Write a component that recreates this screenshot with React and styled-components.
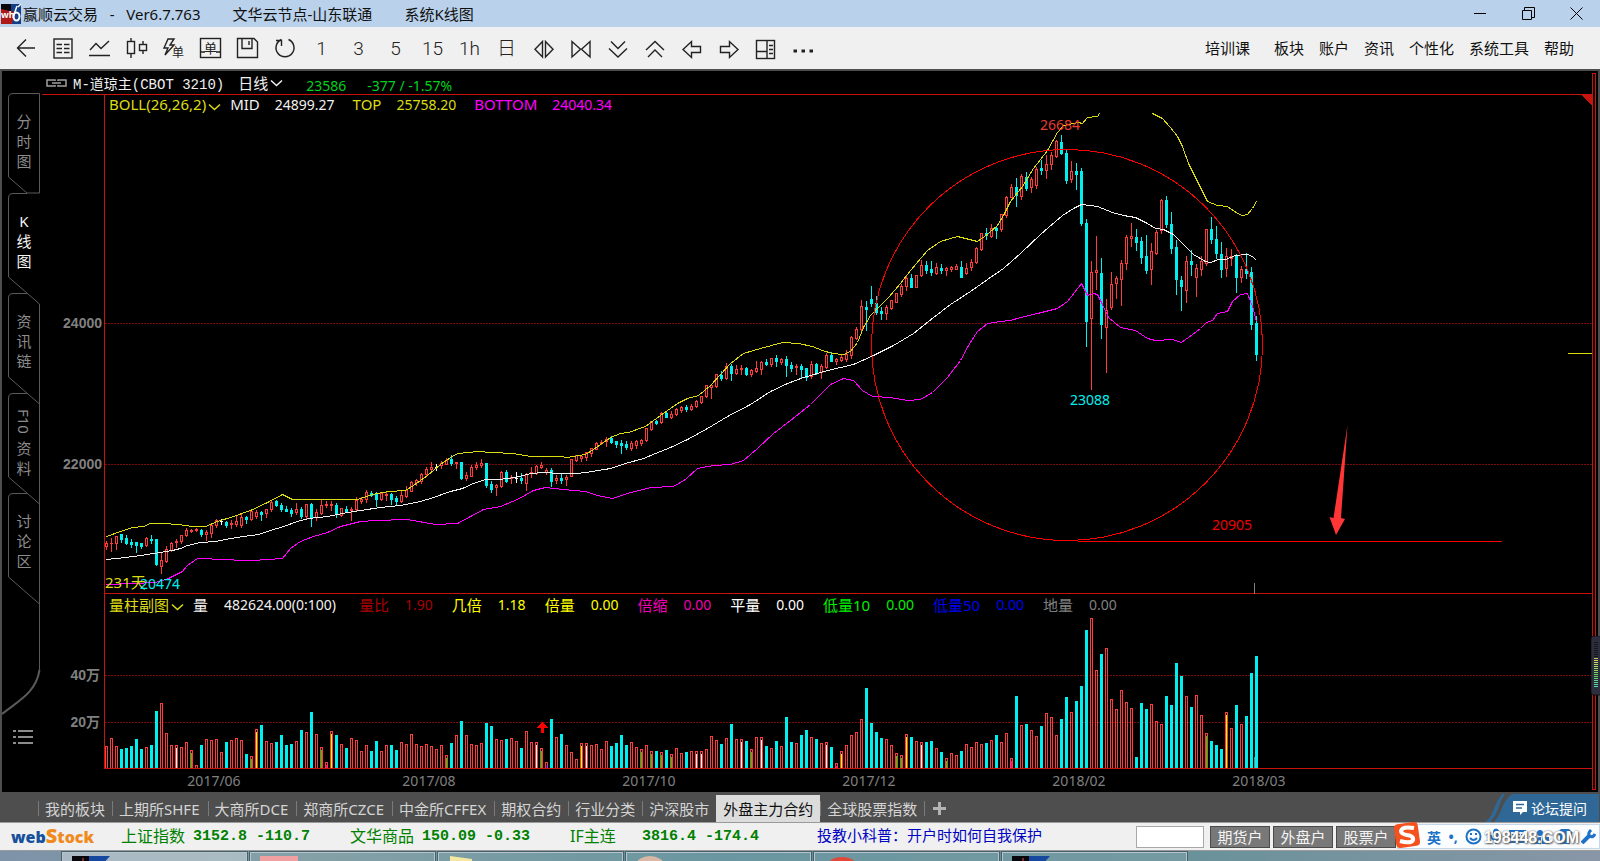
import React from 'react';
import styled, { createGlobalStyle, css } from 'styled-components';

const palette = {
  red: '#c8140c',
  up: '#ff3c3c',
  down: '#00f0f0',
  grid: '#7c0c0c',
  yellow: '#dcdc14',
  white: '#f0f0f0',
  magenta: '#ff00ff',
  frame: '#4e4e4e',
  muted: '#808080',
};

const chartFont = '"Noto Sans", "Noto Sans CJK SC", sans-serif';
const uiFont = '"Noto Sans", "Noto Sans CJK SC", sans-serif';

const GlobalStyle = createGlobalStyle`
  body {
    margin: 0;
    background: black;
    font-family: ${uiFont};
    font-size: 15px;
    overflow-x: hidden;
  }
  *, *::before, *::after {
    box-sizing: border-box;
  }
  button, input {
    font: inherit;
    margin: 0;
  }
  svg {
    display: block;
  }
`;

/* ---------- data ---------- */

// colour, high, body top, body bottom, low, volume top, volume mark
const BARS = `
r 541 543 546 549 746|r 538 543 543 551 738|r 536 536 543 549 746|c 534 534 539 542 749|c 535 538 543 544 748
c 539 542 544 547 746|c 542 542 545 552 739|c 543 543 546 548 749|r 537 538 545 546 747|c 535 539 540 543 745
c 539 539 564 565 711|r 552 560 566 573 703|r 546 549 561 562 733|r 542 543 550 551 745|r 539 541 542 547 745 w
r 535 535 541 543 747|r 528 530 535 536 742|r 529 530 531 532 750 g|r 528 529 530 531 765|c 529 530 534 536 745
r 530 532 534 540 739|r 525 525 533 537 740|r 519 520 525 527 739|w 519 521 521 524 752|c 521 522 525 527 742
r 520 523 524 528 740|r 515 521 524 526 738|r 513 517 525 527 740|c 516 517 519 523 754|r 511 511 519 520 756 g
r 510 512 516 518 729 y|c 511 512 514 520 725|r 509 509 513 517 741|r 501 502 509 511 743|c 500 501 505 506 742
c 503 505 509 511 735|c 506 509 511 511 745|c 508 510 513 516 744|r 503 509 512 514 741|c 507 509 516 518 730
r 504 504 516 519 732|c 503 504 517 526 712|r 509 512 517 520 734|r 499 505 513 514 747 g|r 501 504 505 507 762 m
r 501 504 505 510 731 y|c 503 505 514 517 735|r 508 508 515 516 744|c 506 509 511 512 748|r 507 509 510 520 738
r 497 500 509 511 740|r 497 499 501 503 751|r 490 492 499 502 745|c 491 493 495 496 751|c 492 494 499 506 741
r 493 493 499 500 751|r 491 494 495 500 745|c 493 494 499 504 745|c 496 498 501 504 750|r 490 495 501 502 742
r 486 490 496 497 744|r 481 482 491 491 734|r 479 480 482 485 744|r 473 474 481 483 746|r 467 469 474 476 744
r 462 467 469 470 746|w 464 467 467 470 749|r 461 463 465 468 745|r 458 460 464 464 755 g|c 455 459 463 465 743
r 462 462 463 468 735|c 462 462 478 479 721|r 472 475 478 480 735|r 465 467 476 476 744|r 462 465 467 469 745
r 459 463 465 467 743|c 463 463 485 487 723|c 481 484 489 492 726|r 484 485 487 495 739|r 471 472 486 487 740
c 470 472 481 482 739|r 475 477 478 483 738|w 472 478 478 482 741|c 473 478 480 483 748|r 473 474 483 490 731
r 467 472 473 477 742|r 465 466 473 474 742 w|r 462 465 467 468 748 g|r 468 470 472 474 762 b|c 468 470 481 486 719
r 475 478 480 483 737|c 474 478 480 483 734|r 475 477 479 485 745|r 459 459 476 476 752|r 455 455 460 461 759
r 455 456 458 461 743 y|r 452 452 457 460 743 w|r 448 448 453 456 745|r 442 443 449 449 744|r 440 442 443 444 749
r 437 439 441 446 741|c 436 438 442 443 746|c 441 441 444 447 743|c 440 443 445 453 735|c 441 444 447 449 745
r 441 443 448 450 742|r 440 441 445 448 747|r 439 440 443 445 749 g|r 428 428 440 441 745|r 421 421 429 430 751 g
c 420 421 423 424 751|r 412 413 422 423 752 g|c 412 413 417 417 750|r 411 414 417 418 754 g|r 408 409 414 415 748
r 406 407 410 412 753|c 405 407 409 411 752|r 404 406 409 410 751|r 400 401 406 407 751 w|r 396 396 402 403 751 w
r 385 385 396 397 749|r 385 385 387 398 736|r 374 374 386 387 740|c 371 375 378 380 744|r 363 366 378 379 738
c 364 366 373 380 724|r 365 369 373 374 739|r 365 368 369 374 739 w|c 367 368 374 375 741|r 369 370 374 376 749 g
r 361 368 371 372 737|r 361 362 369 374 737 w|c 359 362 364 365 746|r 358 358 364 366 748|c 355 358 361 366 741
r 358 359 362 364 746|c 356 359 365 376 717|c 362 365 368 371 742|r 364 366 367 374 743|c 364 366 369 378 735
c 368 368 377 380 730|r 361 364 376 378 737|c 363 364 373 374 739|r 364 366 372 378 743|r 353 355 367 368 742 w
c 352 355 361 361 747|r 358 359 361 364 763 m|r 355 357 360 361 751 y|r 350 354 359 361 745|r 336 337 355 358 735
r 327 329 338 339 732|r 300 306 329 330 719|c 301 307 309 330 688|c 286 299 303 306 723|c 296 303 312 314 732
c 307 311 313 319 738|r 305 307 313 319 739|r 300 300 308 309 745|r 293 293 302 302 753 g|r 284 286 294 296 755 g
r 275 278 286 290 734 y|c 274 278 287 287 737|r 275 275 287 287 741|r 260 265 275 276 742 w|c 261 265 270 273 742
c 261 269 272 275 741|r 263 267 273 274 748|c 264 268 270 273 752|r 267 268 270 275 758 g|r 266 267 269 271 753
r 264 266 269 269 755|c 261 267 277 277 751|r 263 268 273 274 744|r 259 262 267 270 747|r 247 248 262 263 742
r 233 233 249 250 744|c 228 233 235 239 743|r 224 228 236 237 740|c 226 228 230 238 735|r 214 214 229 231 742
r 196 197 215 217 733|r 184 187 197 197 758 m|c 178 187 195 206 696|r 174 176 196 199 725|c 172 177 188 190 724
r 177 179 187 192 730|r 167 169 185 188 736|c 160 168 170 174 726|r 155 164 170 178 713|r 152 155 164 169 717
r 140 141 156 157 735|c 135 142 153 154 719|c 150 153 180 183 697|r 161 171 179 182 712|c 163 171 174 189 701
c 168 171 223 225 686|c 219 223 321 346 630|r 261 272 318 389 618|r 236 270 272 289 670|c 258 273 324 338 654
r 299 310 327 372 648|r 272 284 307 309 699|r 276 278 283 298 709|r 260 263 279 305 690|r 235 237 263 269 702
r 223 236 238 246 708|c 229 237 242 250 757|c 237 241 257 263 703|c 235 256 270 273 709|r 243 251 269 284 704
r 230 232 253 254 721|r 199 200 230 233 724|c 196 200 224 227 696|c 212 224 248 253 705|c 240 247 279 294 663
c 276 280 286 310 676|r 256 261 290 302 696|c 250 261 264 275 707|r 264 268 277 296 695|r 256 261 269 275 715
r 229 229 263 265 733 g|c 217 229 239 243 741|c 226 239 253 258 745|c 242 254 269 277 749|r 248 256 268 276 712 y
r 249 256 258 265 728|c 254 255 277 292 705|r 266 269 277 282 724|c 253 269 273 278 716|c 267 272 324 329 673
c 316 323 354 360 656
`
  .trim()
  .split(/[|\n]/)
  .map((row, i) => {
    const [color, high, top, bottom, low, vol, mark] = row.split(' ');
    return { x: 106 + i * 5, color, high: +high, top: +top, bottom: +bottom, low: +low, vol: +vol, mark };
  });

const MID =
  '106,559 125,557 140,555 160,552 172,550 180,548 187,545 200,542 215,541 230,538 243,536 258,534 270,530 283,526 297,521 308,518 327,516 342,513 360,510 380,507 400,505 420,501 433,497 450,491 462,488 473,483 485,479 498,479 515,477 530,473 543,472 560,473 577,473 592,471 610,468 625,463 643,458 655,453 670,447 687,439 707,428 727,416 750,404 770,391 787,383 803,377 827,370 853,364 873,355 893,345 913,333 933,317 950,304 970,291 987,279 1003,268 1020,253 1040,234 1062,215 1073,208 1081,204 1097,206 1112,212 1123,215 1135,217 1147,223 1155,228 1163,229 1173,234 1183,244 1193,254 1205,261 1210,262 1218,259 1225,259 1235,255 1247,254 1252,256 1256,260';

const TOP =
  '106,536 120,531 132,527 143,526 150,523 163,523 178,524 192,526 205,526 217,521 233,516 250,510 267,502 282,494 292,499 317,499 357,499 372,494 388,491 405,490 413,485 427,475 440,464 453,455 458,453 477,451 492,452 513,453 530,456 560,456 567,457 585,454 593,449 603,442 610,437 620,433 628,432 645,426 660,415 677,403 687,398 698,395 710,385 720,374 730,363 743,353 760,348 782,342 798,343 812,346 822,350 832,353 843,354 850,351 857,342 863,327 870,315 877,308 888,297 900,283 910,270 927,250 940,241 957,236 977,241 988,233 997,225 1003,215 1010,201 1022,186 1033,168 1047,150 1057,132 1063,125 1078,122 1082,123 1087,117 1097,116 1099,113';

const TOP_TAIL =
  '1152,113 1162,118 1170,127 1177,136 1182,146 1188,163 1197,181 1207,201 1217,205 1227,206 1237,213 1242,215 1247,214 1252,208 1256,201';

const BOTTOM =
  '106,584 133,583 155,582 168,578 182,571 187,565 197,558 207,558 215,559 252,560 282,558 290,548 300,541 313,536 327,532 340,526 360,521 375,520 407,519 435,524 457,523 470,516 483,509 500,506 517,499 533,490 545,487 563,489 585,491 597,495 612,498 627,493 650,487 673,486 685,479 697,468 713,465 730,464 743,460 757,448 773,433 790,420 810,404 830,384 843,378 853,380 862,390 872,396 890,397 907,400 920,399 932,392 947,377 960,360 968,345 977,331 987,323 1000,321 1010,320 1020,317 1037,313 1057,308 1067,301 1081,283 1087,295 1093,293 1097,294 1102,304 1108,317 1120,327 1135,330 1147,338 1155,340 1172,339 1181,342 1192,334 1200,328 1206,322 1212,320 1217,313 1227,311 1232,301 1240,294 1247,293 1252,306 1256,321';

const DATES = [
  ['2017/06', 214],
  ['2017/08', 429],
  ['2017/10', 649],
  ['2017/12', 869],
  ['2018/02', 1079],
  ['2018/03', 1259],
];

const barColor = { r: palette.up, c: palette.down, w: '#ffffff' };
const markColor = { w: '#ffffff', g: '#00e600', y: '#ffff00', m: '#ff00aa', b: '#0000ff' };

/* ---------- title bar ---------- */

const TitleBar = styled.header`
  display: flex;
  align-items: center;
  height: 27px;
  padding-left: 1px;
  background: #b9d1ea;
  color: #101010;
`;

const TitleText = styled.h1`
  flex: 1;
  display: flex;
  gap: 32px;
  margin: 0 0 0 2px;
  font-size: 15px;
  font-weight: 400;
  line-height: 26px;
  white-space: pre;
`;

const WindowButton = styled.button`
  display: flex;
  justify-content: center;
  align-items: center;
  width: 48px;
  height: 27px;
  padding: 0;
  border: 0;
  background: none;
`;

const AppLogo = ({ size = 20 }) => (
  <svg width={size} height={size} viewBox="0 0 20 20">
    <rect width="20" height="20" fill="#08080c" />
    <path d="M10 0 H20 V20 H10 Z" fill="#123f86" />
    <path d="M0 5 L13 8 L11 20 H0 Z" fill="#b01818" />
    <path d="M16 2 L12.5 12 M20 0 L17 3" stroke="#fff" strokeWidth="1.5" />
    <ellipse cx="15.5" cy="12.5" rx="3" ry="4" fill="none" stroke="#fff" strokeWidth="2" />
    <text x="0" y="14" fontSize="9" fontWeight="700" fill="#fff">
      wh
    </text>
  </svg>
);

/* ---------- toolbar ---------- */

const Toolbar = styled.nav`
  display: flex;
  align-items: center;
  height: 42px;
  padding: 0 26px 0 7px;
  background: #f0f0f0;
`;

const ToolButton = styled.button`
  display: flex;
  justify-content: center;
  align-items: center;
  width: 37px;
  height: 42px;
  padding: 2px 0 0;
  border: 0;
  background: none;
  color: #222;
  font-family: Roboto, 'Noto Sans CJK SC', sans-serif;
  font-size: 19px;
  font-weight: 300;
  line-height: 22px;

  svg {
    fill: none;
    stroke: currentColor;
    stroke-width: 1.4;
  }
`;

const Menu = styled.div`
  display: flex;
  gap: 15px;
  margin-left: auto;
`;

const MenuLink = styled.a`
  color: #101010;
  text-decoration: none;
  line-height: 42px;
  margin-right: ${(props) => (props.$spaced ? '9px' : '0')};
`;

const ICONS = {
  返回: <path d="M21 11 H4 M12 2.5 L3.5 11 L12 19.5" />,
  报价: (
    <>
      <rect x="3" y="2" width="18" height="19" />
      <path d="M5.5 7.5 H11 M13 7.5 H18.5 M5.5 11.5 H11 M13 11.5 H18.5 M5.5 15.5 H11 M13 15.5 H18.5" />
    </>
  ),
  分时: <path d="M2 13 L8 6.5 L13 11.5 L21 4 M1 18.5 H22" />,
  K线: (
    <>
      <rect x="2.5" y="4.5" width="7" height="12" />
      <rect x="14.5" y="7.5" width="7" height="6" />
      <path d="M6 1 V4 M6 17 V21 M18 4 V7 M18 14 V17" />
    </>
  ),
  闪电下单: (
    <>
      <path d="M6 2 H12 L8 8 H12 L3 18 L6 11 H2 Z" />
      <text x="10" y="20" fontSize="12" fontWeight="400" fill="currentColor" stroke="none">
        单
      </text>
    </>
  ),
  下单: (
    <>
      <rect x="1.5" y="1.5" width="20" height="19" />
      <path d="M2 15 H6 M17 15 H21" />
      <text x="5" y="16" fontSize="13" fontWeight="400" fill="currentColor" stroke="none">
        单
      </text>
    </>
  ),
  保存: <path d="M1.5 1.5 H18 L21.5 5 V20.5 H1.5 Z M6 2 V11.5 H16 V2 M13 4 V8" />,
  刷新: <path d="M8.5 2.5 A9 9 0 1 0 15.5 2.5 M3 3.5 H8.5 V9" />,
  1: '1',
  3: '3',
  5: '5',
  15: '15',
  '1h': '1h',
  日: '日',
  放宽: <path d="M10.5 4.5 V20 L3 12.3 Z M13.5 4.5 V20 L21 12.3 Z" />,
  收窄: <path d="M3 4.5 V20 L11.5 12.3 Z M21 4.5 V20 L12.5 12.3 Z" />,
  向下: <path d="M5 4.5 L12 11.5 L19 4.5 M3 11.5 L12 20 L21 11.5" />,
  向上: <path d="M3 13 L12 4.5 L21 13 M5 20 L12 13 L19 20" />,
  左移: <path d="M3 12.5 L11.5 4.5 V9.5 H20.5 V15.5 H11.5 V20.5 Z" />,
  右移: <path d="M21 12.5 L12.5 4.5 V9.5 H3.5 V15.5 H12.5 V20.5 Z" />,
  布局: (
    <>
      <rect x="2.5" y="3.5" width="18" height="18" />
      <path d="M13 4 V21 M3 14.5 H13 M15 8.5 H19 M15 12.5 H19 M15 16.5 H19" />
    </>
  ),
  更多: <path d="M2.5 14 H6 M10.5 14 H14 M18.5 14 H22" strokeWidth="3" />,
};
const TOOLS = ['返回', '报价', '分时', 'K线', '闪电下单', '下单', '保存', '刷新', '1', '3', '5', '15', '1h', '日', '放宽', '收窄', '向下', '向上', '左移', '右移', '布局', '更多'];
const MENUS = ['培训课', '板块', '账户', '资讯', '个性化', '系统工具', '帮助'];

/* ---------- workspace ---------- */

const Workspace = styled.main`
  display: flex;
  border: solid ${palette.frame};
  border-width: 2px 2px 0;
  background: black;
`;

const Rail = styled.aside`
  flex: none;
  display: flex;
  flex-direction: column;
  width: 40px;
  padding: 22px 0 0 6px;
`;

const RailTab = styled.button`
  position: relative;
  display: flex;
  flex-direction: column;
  justify-content: center;
  align-items: center;
  width: 32px;
  height: 100px;
  padding: 0 0 4px;
  border: 0;
  background: none;
  color: ${(props) => (props.$active ? '#f4f4f4' : '#8c8c8c')};
  line-height: 20px;

  svg {
    position: absolute;
    left: 0;
    top: 0;
    overflow: visible;
  }
`;

const Sideways = styled.span`
  height: 34px;
  writing-mode: vertical-rl;
`;

const railStroke = { fill: 'none', stroke: '#5a5a5a', strokeWidth: 1 };

const RailTabs = [
  { chars: ['分', '时', '图'], path: 'M19 100 L.5 84 V5 Q.5 .5 5 .5 H31.5 V100 H19' },
  { chars: ['K', '线', '图'], active: true, path: 'M19 .5 H5 Q.5 .5 .5 5 V84 L31.5 111' },
  { chars: ['资', '讯', '链'], path: 'M19 .5 H5 Q.5 .5 .5 5 V84 L31.5 111 V11' },
  { chars: ['F10', '资', '料'], path: 'M19 .5 H5 Q.5 .5 .5 5 V84 L31.5 111 V11' },
  { chars: ['讨', '论', '区'], path: 'M19 .5 H5 Q.5 .5 .5 5 V84 L31.5 111 V11' },
];

const RailFoot = styled.svg`
  margin-left: -6px;
  overflow: visible;
`;

const ListButton = styled.button`
  width: 22px;
  height: 16px;
  margin: 14px 0 0 4px;
  padding: 0;
  border: 0;
  background: none;
`;

const Main = styled.section`
  flex: 1;
  min-width: 0;
`;

const QuoteRow = styled.div`
  display: flex;
  align-items: center;
  height: 24px;
  padding: 0 0 0 4px;
  border-bottom: 1px solid ${palette.red};
  color: ${palette.white};
  white-space: pre;
`;

const Contract = styled.span`
  margin: 0 14px 0 6px;
  font-family: 'Liberation Mono', 'Noto Sans CJK SC', monospace;
  font-size: 14px;
`;

const DropButton = styled.button`
  display: flex;
  align-items: center;
  gap: 2px;
  padding: 0;
  border: 0;
  background: none;
  color: ${(props) => props.$color || 'inherit'};
  font-size: 15px;
`;

const Quote = styled.span`
  margin-left: ${(props) => props.$gap}px;
  padding-top: 5px;
  color: #00d21e;
  font-family: ${chartFont};
  font-size: 14px;
`;

const Chevron = () => (
  <svg width="13" height="8" fill="none" stroke="currentColor" strokeWidth="1.5">
    <path d="M1 1.5 L6.5 6.5 L12 1.5" />
  </svg>
);

const Charts = styled.div`
  display: grid;
  grid-template-columns: 62px 1fr;
`;

const Axis = styled.svg`
  width: 62px;
  height: 100%;
  overflow: visible;
  fill: ${palette.muted};
  font: 700 14px 'Liberation Sans', 'Noto Sans CJK SC', sans-serif;
  text-anchor: end;
`;

const Pane = styled.div`
  min-width: 0;
  border: solid ${palette.red};
  border-width: 0 0 1px 1px;
`;

const Label = styled.span`
  margin: 0 15px 0 18px;
  color: ${(props) => props.$color};
  font-size: 15px;
`;

const Value = styled.span`
  color: ${(props) => props.$color};
`;

const InfoRow = styled.div`
  display: flex;
  align-items: center;
  height: ${(props) => props.$height}px;
  padding: 0 0 2px 4px;
  font-family: ${chartFont};
  font-size: 14px;
  white-space: nowrap;

  ${DropButton} svg {
    margin-top: 6px;
  }

  ${DropButton} + ${Label} {
    margin-left: 9px;
  }

  ${(props) =>
    props.$wide &&
    css`
      ${Label} {
        margin-left: 19px;
        margin-right: 16px;
      }

      ${Value}:nth-child(3) {
        margin-right: 4px;
      }
    `}
`;

const Plot = styled.svg`
  width: 100%;
  height: ${(props) => props.$height}px;
  overflow: visible;
  font: 14px ${chartFont};
`;

const Dates = styled.svg`
  grid-column: 2;
  width: 100%;
  height: 23px;
  overflow: visible;
  fill: ${palette.muted};
  font: 14px ${chartFont};
  text-anchor: middle;
`;

const ScrollStrip = styled.div`
  flex: none;
  width: 4px;
  margin: 2px 2px 2px 0;
  border: 1px solid ${palette.red};
`;

const MeterBadge = styled.svg`
  position: absolute;
  right: 0;
  top: 636px;
`;

const GridLine = ({ y }) => <line x1="0" x2="100%" y1={y} y2={y} stroke={palette.grid} strokeDasharray="2 1" />;

const Candle = ({ bar }) => {
  const { x, color, high, top, bottom, low } = bar;
  const fill = barColor[color];
  const height = bottom - top + 1;
  return (
    <g fill={fill}>
      <rect x={x} y={high} width="1" height={low - high + 1} />
      <rect x={x - 1} y={top} width="3" height={height} />
      {color === 'r' && height > 2 && <rect x={x} y={top + 1} width="1" height={height - 2} fill="#000" />}
    </g>
  );
};

const VolumeBar = ({ bar }) => {
  const { x, color, vol, mark } = bar;
  if (color === 'c') return <rect x={x - 1} y={vol} width="3" height={768 - vol} fill={palette.down} />;
  const inner = Math.min(vol + 3, 767);
  return (
    <>
      <path d={`M${x - 0.5} 768 V${vol + 0.5} H${x + 1.5} V768`} fill="none" stroke={palette.up} />
      {mark && <rect x={x} y={inner} width="1" height={768 - inner} fill={markColor[mark]} />}
    </>
  );
};

const PricePane = () => (
  <Pane>
    <InfoRow $height={20}>
      <DropButton $color={palette.yellow}>
        BOLL(26,26,2)
        <Chevron />
      </DropButton>
      <Label $color={palette.white}>MID</Label>
      <Value $color={palette.white}>24899.27</Value>
      <Label $color={palette.yellow}>TOP</Label>
      <Value $color={palette.yellow}>25758.20</Value>
      <Label $color={palette.magenta}>BOTTOM</Label>
      <Value $color={palette.magenta}>24040.34</Value>
    </InfoRow>
    <Plot $height={478} shapeRendering="crispEdges">
      <GridLine y={208.5} />
      <GridLine y={349.5} />
      <svg x="100%" overflow="visible">
        <path d="M-11 -20 H0 V-9 Z" fill={palette.red} />
        <line x1="-24" x2="0" y1="238.5" y2="238.5" stroke={palette.yellow} />
      </svg>
      <g transform="translate(-105 -115)">
        {BARS.map((bar) => (
          <Candle key={bar.x} bar={bar} />
        ))}
        <g fill="none" strokeWidth="1" transform="translate(.5 .5)">
          <polyline points={MID} stroke={palette.white} />
          <polyline points={TOP} stroke={palette.yellow} />
          <polyline points={TOP_TAIL} stroke={palette.yellow} />
          <polyline points={BOTTOM} stroke={palette.magenta} />
          <circle cx="1066.5" cy="344.5" r="195.5" stroke="#ff0000" />
          <path d="M1077 541 H1501" stroke="#ff0000" />
          <path d="M1254 582 V593" stroke={palette.muted} />
        </g>
        <path
          d="M1347.5 425 L1333.5 518 L1329.5 517 L1336 535 L1345 519 L1341 518 Z"
          fill="#ff3636"
          shapeRendering="geometricPrecision"
        />
        <text x="1040" y="130" fill="#e83c32">26684</text>
        <text x="1070" y="405" fill={palette.down}>23088</text>
        <text x="1212" y="530" fill="#f00000">20905</text>
        <text x="105" y="588" fontSize="15" fill={palette.yellow}>231天</text>
        <text x="140" y="589" fill={palette.down}>20474</text>
      </g>
    </Plot>
  </Pane>
);

const VOLUME_STATS = [
  ['量比', '1.90', '#aa0000'],
  ['几倍', '1.18', '#ffff00'],
  ['倍量', '0.00', '#ffff00'],
  ['倍缩', '0.00', '#f000b4'],
  ['平量', '0.00', '#ffffff'],
  ['低量10', '0.00', '#00f000'],
  ['低量50', '0.00', '#0000f0'],
  ['地量', '0.00', '#808080'],
];

const VolumePane = () => (
  <Pane>
    <InfoRow $height={22} $wide>
      <DropButton $color={palette.yellow}>
        量柱副图
        <Chevron />
      </DropButton>
      <Label $color={palette.white}>量</Label>
      <Value $color={palette.white}>482624.00(0:100)</Value>
      {VOLUME_STATS.map(([name, value, color]) => (
        <React.Fragment key={name}>
          <Label $color={color}>{name}</Label>
          <Value $color={color}>{value}</Value>
        </React.Fragment>
      ))}
    </InfoRow>
    <Plot $height={152} shapeRendering="crispEdges">
      <GridLine y={59.5} />
      <GridLine y={106.5} />
      <g transform="translate(-105 -616)">
        {BARS.map((bar) => (
          <VolumeBar key={bar.x} bar={bar} />
        ))}
        <path d="M542 722 L548 728 H544 V733 H541 V728 H537 Z" fill="#ff0000" />
        <path d="M1254.5 757 V768" stroke={palette.muted} />
      </g>
    </Plot>
  </Pane>
);

/* ---------- bottom tabs ---------- */

const BoardTabs = styled.nav`
  display: flex;
  align-items: flex-end;
  height: 30px;
  padding-left: 38px;
  background: ${palette.frame};
`;

const BoardTab = styled.button`
  height: 27px;
  padding: 0 ${(props) => (props.$latin ? '8px' : '7px')} 0 7px;
  border: 0;
  background: linear-gradient(#7a7a7a, #7a7a7a) left center / 1px 15px no-repeat;
  color: #d4d4d4;
  font-size: 15px;
  line-height: 24px;
  white-space: nowrap;

  ${(props) =>
    props.$active &&
    css`
      background: #dcdcdc;
      color: #101010;
    `}
`;

const AddTab = styled(BoardTab)`
  display: flex;
  align-items: center;
  padding: 0 9px;
`;

const ForumLink = styled.a`
  position: relative;
  display: flex;
  align-items: center;
  justify-content: flex-end;
  gap: 4px;
  width: 114px;
  height: 28px;
  margin: 0 1px 0 auto;
  padding-right: 12px;
  color: #fff;
  font-size: 14px;
  text-decoration: none;
  isolation: isolate;
`;

const ForumShape = styled.svg`
  position: absolute;
  left: 0;
  top: 0;
  z-index: -1;
`;

const BOARDS = ['我的板块', '上期所SHFE', '大商所DCE', '郑商所CZCE', '中金所CFFEX', '期权合约', '行业分类', '沪深股市', '外盘主力合约', '全球股票指数'];

/* ---------- status bar ---------- */

const StatusBar = styled.footer`
  display: flex;
  align-items: center;
  height: 29px;
  padding-left: 11px;
  border: solid #9a9a9a;
  border-width: 1px 0;
  background: #f0f0f0;
`;

const Brand = styled.span`
  width: 110px;
  color: #17509c;
  font: 800 16px/26px 'Open Sans', sans-serif;

  b {
    display: inline-block;
    color: #f08a1c;
    font-weight: 800;
  }

  b::first-letter {
    font-size: 20px;
  }
`;

const Index = styled.span`
  display: flex;
  align-items: center;
  gap: 8px;
  margin-right: 40px;
  color: #008000;
  font-size: 16px;
  line-height: 22px;
  white-space: pre;
`;

const IndexName = styled.span`
  width: 64px;
  padding-bottom: 1px;
`;

const IndexValue = styled.b`
  font: 700 15px/22px 'Liberation Mono', monospace;
`;

const NewsLink = styled.a`
  margin-left: 18px;
  padding-bottom: 5px;
  color: #0000c0;
  text-decoration: none;
  white-space: nowrap;
`;

const CodeInput = styled.input`
  width: 68px;
  height: 22px;
  margin: 0 6px 0 auto;
  padding: 0 2px;
  border: 1px solid #a8a8a8;
  background: #fff;
`;

const AccountButton = styled.button`
  width: 60px;
  height: 22px;
  margin-right: 3px;
  padding: 0;
  border: 1px solid #4a4a4a;
  background: #787878;
  color: #f4f4f4;
  font-size: 15px;
  line-height: 18px;
`;

const ImeBar = styled.div`
  position: relative;
  display: flex;
  align-items: center;
  justify-content: space-between;
  width: 203px;
  height: 25px;
  margin-left: -2px;
  padding: 0 3px 0 29px;
  border: 1px solid #c4d8ea;
  background: #fbfdff;
  color: #1d72c8;
  font-size: 14px;
  font-weight: 700;
`;

const SogouLogo = styled.svg`
  position: absolute;
  left: -5px;
  top: -4px;
`;

const Watermark = styled.span`
  position: absolute;
  right: 20px;
  top: 1px;
  color: #fff;
  font: 700 16px/24px 'Liberation Sans', sans-serif;
  text-shadow: 1px 1px 2px #555, 0 0 2px #777;
`;

const Taskbar = styled.div`
  display: flex;
  gap: 3px;
  height: 11px;
  padding: 1px 0 0 62px;
  overflow: hidden;
  background: linear-gradient(90deg, #7f93a8 0, #7a98a0 20%, #5d8e98 45%, #6a929a 75%, #8896a8 100%);
`;

const Task = styled.div`
  width: 185px;
  padding: 3px 0 0 9px;
  border: 1px solid #b4c6cc;
  border-bottom: 0;
  background: rgba(255, 255, 255, ${(props) => (props.$active ? 0.35 : 0.08)});
  outline: 1px solid #47606c;
`;

const TASK_ICONS = [
  <path d="M0 0 H17 V9 H0 Z" fill="#08080c" />,
  <path d="M0 0 H38 V9 H0 Z" fill="#f0a0a0" />,
  <path d="M2 0 L24 3 V9 H2 Z" fill="#f4e8a0" />,
  <ellipse cx="14" cy="9" rx="14" ry="9" fill="#d8b8a4" />,
  <ellipse cx="18" cy="12" rx="16" ry="11" fill="#e04838" />,
  <path d="M0 0 H17 V9 H0 Z" fill="#08080c" />,
];

const App = () => {
  return (
    <>
      <GlobalStyle />
      <TitleBar>
        <AppLogo />
        <TitleText>
          <span>赢顺云交易   -   Ver6.7.763</span>
          <span>文华云节点-山东联通</span>
          <span>系统K线图</span>
        </TitleText>
        <WindowButton aria-label="最小化">
          <svg width="13" height="13" stroke="#000"><path d="M0 6.5 H12" /></svg>
        </WindowButton>
        <WindowButton aria-label="还原">
          <svg width="13" height="13" fill="none" stroke="#000"><path d="M.5 3.5 H9.5 V12.5 H.5 Z M2.5 3 V.5 H12.5 V10.5 H10" /></svg>
        </WindowButton>
        <WindowButton aria-label="关闭">
          <svg width="13" height="13" stroke="#000"><path d="M.5 .5 L12.5 12.5 M12.5 .5 L.5 12.5" /></svg>
        </WindowButton>
      </TitleBar>

      <Toolbar>
        {TOOLS.map((name) => (
          <ToolButton key={name} aria-label={name}>
            {typeof ICONS[name] === 'string' ? (
              ICONS[name]
            ) : (
              <svg width="24" height="24">{ICONS[name]}</svg>
            )}
          </ToolButton>
        ))}
        <Menu>
          {MENUS.map((name, i) => (
            <MenuLink key={name} href="#" $spaced={i === 0}>{name}</MenuLink>
          ))}
        </Menu>
      </Toolbar>

      <Workspace>
        <Rail>
          {RailTabs.map(({ chars, active, path }) => (
            <RailTab key={path + chars[0]} $active={active}>
              <svg width="32" height="100" {...railStroke}><path d={path} /></svg>
              {chars.map((char) =>
                char.length > 1 ? <Sideways key={char}>{char}</Sideways> : <span key={char}>{char}</span>
              )}
            </RailTab>
          ))}
          <RailFoot width="40" height="122" {...railStroke}>
            <path d="M37.5 11 V77" />
            <path d="M37.5 77 C34 100 16 108 0 121" strokeWidth="2" />
          </RailFoot>
          <ListButton aria-label="列表">
            <svg width="22" height="16" stroke="#8c8c8c" strokeWidth="2">
              <path d="M1 2 H4 M6 2 H21 M1 8 H4 M6 8 H21 M1 14 H4 M6 14 H21" />
            </svg>
          </ListButton>
        </Rail>
        <Main>
          <QuoteRow>
            <svg width="21" height="8" fill="none" stroke="#a0a0a0" strokeWidth="1.5">
              <path d="M9 2 V1 H1 V7 H9 V6 M12 2 V1 H20 V7 H12 V6 M6 4 H15" />
            </svg>
            <Contract>M-道琼主(CBOT 3210)</Contract>
            <DropButton>
              日线
              <Chevron />
            </DropButton>
            <Quote $gap={23}>23586</Quote>
            <Quote $gap={21}>-377 / -1.57%</Quote>
          </QuoteRow>
          <Charts>
            <Axis>
              <text x="60" y="233">24000</text>
              <text x="60" y="374">22000</text>
            </Axis>
            <PricePane />
            <Axis>
              <text x="58" y="86">40万</text>
              <text x="58" y="133">20万</text>
            </Axis>
            <VolumePane />
            <Dates>
              {DATES.map(([date, x]) => (
                <text key={date} x={x - 104} y="17">{date}</text>
              ))}
            </Dates>
          </Charts>
        </Main>
        <ScrollStrip />
      </Workspace>
      <MeterBadge width="9" height="60">
        <rect width="12" height="59" rx="3" fill="#2c2e3e" stroke="#14141c" />
        {Array.from({ length: 23 }, (_, i) => (
          <rect
            key={i}
            x="3"
            y={6 + i * 2}
            width="4"
            height="1"
            fill={i < 8 ? '#15161f' : `hsl(${50 + (i - 8) * 8}, 60%, 60%)`}
          />
        ))}
      </MeterBadge>

      <BoardTabs>
        {BOARDS.map((name) => (
          <BoardTab key={name} $active={name === '外盘主力合约'} $latin={/[A-Z]/.test(name)}>{name}</BoardTab>
        ))}
        <AddTab aria-label="添加">
          <svg width="13" height="13" stroke="#b4b4b4" strokeWidth="3"><path d="M6.5 0 V13 M0 6.5 H13" /></svg>
        </AddTab>
        <ForumLink href="#">
          <ForumShape width="114" height="28">
            <path d="M114 0 H27 Q20 5 15 17 Q11 26 5 28 H114 Z" fill="#2f6897" />
            <path d="M17 0 Q11 8 8 17 Q5 25 0 28 H5 Q10 25 13 16 Q15 7 20 0 Z" fill="#2f6897" />
            <path d="M23 0 Q17 8 14 17 Q11 24 7 28" fill="none" stroke={palette.frame} strokeWidth="3" />
          </ForumShape>
          <svg width="14" height="14" fill="#fff">
            <path d="M0 0 H14 V11 H10 L7 14 V11 H0 Z" />
            <path d="M3 3.5 H11 M3 7 H9" stroke="#2f6897" strokeWidth="1.5" />
          </svg>
          论坛提问
        </ForumLink>
      </BoardTabs>

      <StatusBar>
        <Brand>web<b>Stock</b></Brand>
        <Index>
          <IndexName>上证指数</IndexName>
          <IndexValue>3152.8 -110.7</IndexValue>
        </Index>
        <Index>
          <IndexName>文华商品</IndexName>
          <IndexValue>150.09 -0.33</IndexValue>
        </Index>
        <Index>
          <IndexName>IF主连</IndexName>
          <IndexValue>3816.4 -174.4</IndexValue>
        </Index>
        <NewsLink href="#">投教小科普：开户时如何自我保护</NewsLink>
        <CodeInput aria-label="代码" />
        <AccountButton>期货户</AccountButton>
        <AccountButton>外盘户</AccountButton>
        <AccountButton>股票户</AccountButton>
        <ImeBar>
          <SogouLogo width="28" height="28" viewBox="0 0 28 28">
            <rect x="2" y="2" width="24" height="24" rx="4" fill="#f4511e" transform="rotate(-8 14 14)" />
            <path d="M21 7 Q9 5 8 10 Q8 13 14 14 Q21 15 20 19 Q18 23 7 20" fill="none" stroke="#fff" strokeWidth="4" />
          </SogouLogo>
          <span>英</span>
          <span>•,</span>
          <svg width="17" height="17" fill="none" stroke="currentColor" strokeWidth="2">
            <circle cx="8.5" cy="8.5" r="7" />
            <path d="M5 10 Q8.5 14 12 10 M6 5 V7 M11 5 V7" />
          </svg>
          <svg width="12" height="17" fill="currentColor" stroke="currentColor">
            <rect x="3.5" y="1" width="5" height="9" rx="2.5" />
            <path d="M1 7 Q1 12 6 12 Q11 12 11 7 M6 12 V16" fill="none" strokeWidth="2" />
          </svg>
          <svg width="17" height="13" fill="none" stroke="currentColor" strokeWidth="2">
            <rect x="1" y="1" width="15" height="11" />
            <path d="M3 4.5 H14 M3 7.5 H14 M5 10 H12" strokeDasharray="2 1" strokeWidth="1" />
          </svg>
          <svg width="16" height="16" fill="currentColor">
            <circle cx="6" cy="4" r="3" />
            <path d="M0 15 Q0 8 6 8 H7 V15 Z M8 8 H15 V15 H8 Z" />
          </svg>
          <svg width="16" height="15" fill="currentColor">
            <path d="M4 0 H12 L16 4 L13 7 V15 H3 V7 L0 4 Z" />
          </svg>
          <svg width="15" height="15" fill="none" stroke="currentColor" strokeWidth="4">
            <path d="M1 14 L8 7" />
            <path d="M10 1 Q6 5 9 7 Q12 9 14 5" strokeWidth="3" />
          </svg>
          <Watermark>198448.COM</Watermark>
        </ImeBar>
      </StatusBar>

      <Taskbar>
        {TASK_ICONS.map((icon, i) => (
          <Task key={i} $active={i === 0}>
            <svg width="44" height="9">
              {icon}
              {i % 5 === 0 && <path d="M17 0 H38 L30 9 H17 Z" fill="#1648a0" />}
              {i % 5 === 0 && <path d="M11 2 V8" stroke="#e05050" />}
            </svg>
          </Task>
        ))}
      </Taskbar>
    </>
  );
};

export default App;
